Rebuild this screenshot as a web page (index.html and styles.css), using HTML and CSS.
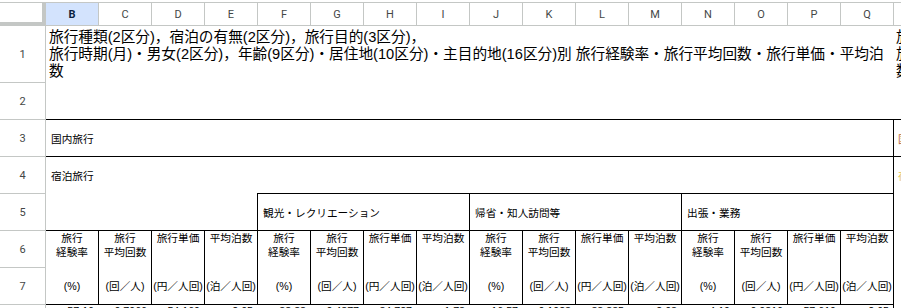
FILE: index.html
```html
<!DOCTYPE html>
<html lang="ja">
<head>
<meta charset="utf-8">
<title>Sheet</title>
<link rel="stylesheet" href="styles.css">
</head>
<body>
<div class="sheet">
  <div class="corner"></div>
  <div class="ch sel">B</div>
  <div class="ch">C</div>
  <div class="ch">D</div>
  <div class="ch">E</div>
  <div class="ch">F</div>
  <div class="ch">G</div>
  <div class="ch">H</div>
  <div class="ch">I</div>
  <div class="ch">J</div>
  <div class="ch">K</div>
  <div class="ch">L</div>
  <div class="ch">M</div>
  <div class="ch">N</div>
  <div class="ch">O</div>
  <div class="ch">P</div>
  <div class="ch">Q</div>
  <div class="ch">R</div>

  <div class="rh first">1</div>
  <div class="c span16 title"><div class="title-in">旅行種類(2区分)，宿泊の有無(2区分)，旅行目的(3区分)，<br>旅行時期(月)・男女(2区分)，年齢(9区分)・居住地(10区分)・主目的地(16区分)別 旅行経験率・旅行平均回数・旅行単価・平均泊数</div></div>
  <div class="c title"><div class="title-in">旅行種類(2区分)，宿泊の有無(2区分)，旅行目的(3区分)，<br>旅行時期(月)・男女(2区分)，年齢(9区分)・居住地(10区分)・主目的地(16区分)別 旅行経験率・旅行平均回数・旅行単価・平均泊数</div></div>

  <div class="rh">2</div>
  <div class="c span16"></div>
  <div class="c"></div>

  <div class="rh">3</div>
  <div class="c span16 lbl bt">国内旅行</div>
  <div class="c lbl bt bl edge-a">国内旅行</div>

  <div class="rh">4</div>
  <div class="c span16 lbl bt">宿泊旅行</div>
  <div class="c lbl bt bl edge-b">宿泊旅行</div>

  <div class="rh">5</div>
  <div class="c span4"></div>
  <div class="c span4 lbl bt bl">観光・レクリエーション</div>
  <div class="c span4 lbl bt bl">帰省・知人訪問等</div>
  <div class="c span4 lbl bt bl">出張・業務</div>
  <div class="c bl"></div>

  <div class="rh">6</div>
  <div class="c hd bt">旅行<br>経験率</div>
  <div class="c hd bt bl">旅行<br>平均回数</div>
  <div class="c hd bt bl">旅行単価</div>
  <div class="c hd bt bl">平均泊数</div>
  <div class="c hd bt bl">旅行<br>経験率</div>
  <div class="c hd bt bl">旅行<br>平均回数</div>
  <div class="c hd bt bl">旅行単価</div>
  <div class="c hd bt bl">平均泊数</div>
  <div class="c hd bt bl">旅行<br>経験率</div>
  <div class="c hd bt bl">旅行<br>平均回数</div>
  <div class="c hd bt bl">旅行単価</div>
  <div class="c hd bt bl">平均泊数</div>
  <div class="c hd bt bl">旅行<br>経験率</div>
  <div class="c hd bt bl">旅行<br>平均回数</div>
  <div class="c hd bt bl">旅行単価</div>
  <div class="c hd bt bl">平均泊数</div>
  <div class="c bl"></div>

  <div class="rh">7</div>
  <div class="c un">(%)</div>
  <div class="c un bl">(回／人)</div>
  <div class="c un bl">(円／人回)</div>
  <div class="c un bl">(泊／人回)</div>
  <div class="c un bl">(%)</div>
  <div class="c un bl">(回／人)</div>
  <div class="c un bl">(円／人回)</div>
  <div class="c un bl">(泊／人回)</div>
  <div class="c un bl">(%)</div>
  <div class="c un bl">(回／人)</div>
  <div class="c un bl">(円／人回)</div>
  <div class="c un bl">(泊／人回)</div>
  <div class="c un bl">(%)</div>
  <div class="c un bl">(回／人)</div>
  <div class="c un bl">(円／人回)</div>
  <div class="c un bl">(泊／人回)</div>
  <div class="c bl"></div>

  <div class="rh">8</div>
  <div class="c num bt">57.16</div>
  <div class="c num bt">0.7966</div>
  <div class="c num bt">54,169</div>
  <div class="c num bt">2.05</div>
  <div class="c num bt">38.88</div>
  <div class="c num bt">0.4877</div>
  <div class="c num bt">34,727</div>
  <div class="c num bt">1.73</div>
  <div class="c num bt">16.57</div>
  <div class="c num bt">0.1923</div>
  <div class="c num bt">33,835</div>
  <div class="c num bt">2.03</div>
  <div class="c num bt">4.19</div>
  <div class="c num bt">0.0816</div>
  <div class="c num bt">57,619</div>
  <div class="c num bt">2.05</div>
  <div class="c bl"></div>
</div>
</body>
</html>
```

FILE: styles.css
```css
* { box-sizing: border-box; }

html, body {
  margin: 0;
  padding: 0;
  background: #ffffff;
}

body {
  width: 901px;
  height: 308px;
  overflow: hidden;
}

.sheet {
  display: grid;
  grid-template-columns: 46px 52px repeat(16, 53px);
  grid-template-rows: 24px 56px repeat(7, 37px);
  padding-top: 2px;
  width: 946px;
  font-family: "Liberation Sans", "Noto Sans CJK JP", sans-serif;
  color: #000000;
}

/* headers */
.corner {
  border-top: 1px solid #c4c7c5;
  border-right: 4px solid #c4c7c5;
  border-bottom: 4px solid #c4c7c5;
  background: #ffffff;
}

.ch {
  border-top: 1px solid #c4c7c5;
  border-bottom: 1px solid #c4c7c5;
  border-left: 1px solid #c4c7c5;
  font-family: "Roboto", "Liberation Sans", sans-serif;
  font-size: 11px;
  color: #444746;
  display: flex;
  align-items: center;
  justify-content: center;
}

.ch.sel {
  border-left: 0;
  background: #d3e3fd;
  color: #0b1f3f;
  font-weight: bold;
}

.rh {
  border-top: 1px solid #c4c7c5;
  border-right: 1px solid #c4c7c5;
  font-family: "Roboto", "Liberation Sans", sans-serif;
  font-size: 11px;
  color: #444746;
  display: flex;
  align-items: center;
  justify-content: center;
}

.rh.first { border-top: 0; }

/* cells */
.c {
  overflow: visible;
  white-space: nowrap;
  min-width: 0;
}

.span16 { grid-column: span 16; }
.span4 { grid-column: span 4; }

.bt { border-top: 1px solid #000000; }
.bl { border-left: 1px solid #000000; }

.title {
  padding: 3px 3px 0 3px;
  font-size: 14.67px;
  line-height: 17px;
  white-space: normal;
}

.title-in {
  width: 841px;
}

.lbl {
  display: flex;
  align-items: center;
  padding-left: 5px;
  font-size: 10.67px;
}

.edge-a { color: #b8693a; padding-left: 4px; }
.edge-b { color: #e6c65a; padding-left: 4px; }

.hd {
  text-align: center;
  font-size: 10.67px;
  line-height: 14px;
  white-space: nowrap;
}

.un {
  display: flex;
  align-items: center;
  justify-content: center;
  font-size: 10.67px;
}

.num {
  text-align: right;
  padding-right: 4px;
  font-size: 10.67px;
  line-height: 13px;
}
```
